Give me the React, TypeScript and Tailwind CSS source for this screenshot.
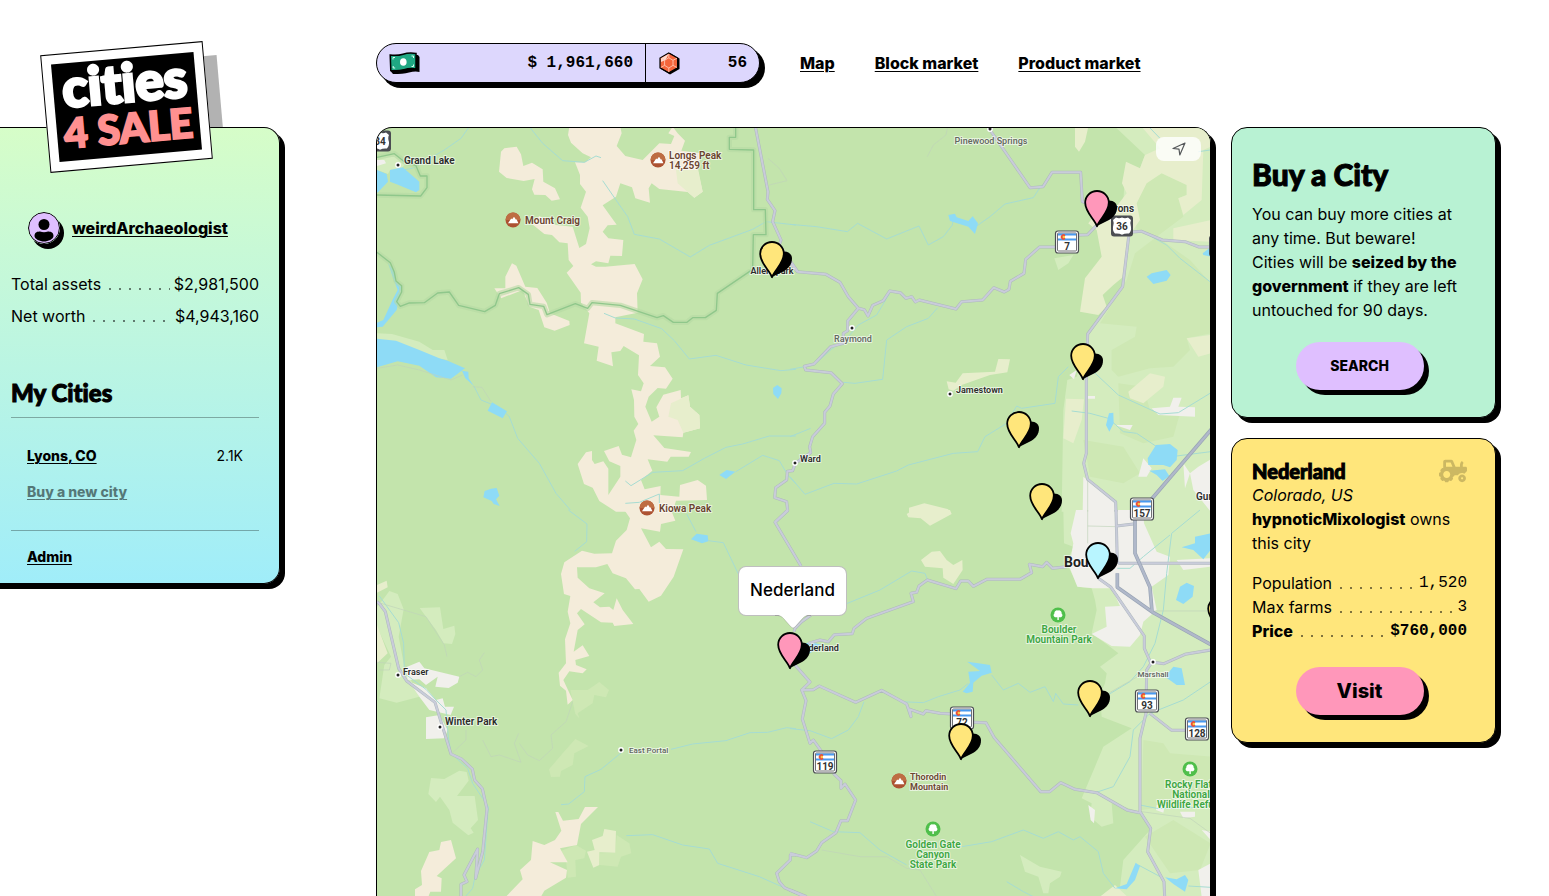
import React from "react";
import { FaTractor } from "react-icons/fa";

type Tile = {
  sand?: string;
  meadow?: string;
  field?: string;
  grove?: string;
  town?: string;
  water?: string;
  river?: string;
  track?: string;
  border?: string;
  road?: string;
  highway?: string;
};

/* Map geometry is stored per tile, at three units to the pixel. */
const TILES: { x: number; y: number; d: Tile }[] = [
  {
    x: -1,
    y: -8,
    d: {
      sand:
        "M580 20L733 20L737 40L722 78L748 108L800 120L850 70L885 72L895 48L877 40L890 20L905 40L927 62L916 92L975 100L965 150L980 215L955 233L935 216L850 207L827 190L818 205L822 248L778 235L768 202L733 190L720 230L680 256L722 314L695 316L680 335L697 355L742 360L738 408L703 407L697 430L660 424L645 433L660 440L688 440L776 432L800 478L783 520L785 578L718 592L718 610L804 642L802 665L843 670L852 710L822 738L867 742L890 776L870 806L845 804L818 830L808 860L827 905L850 890L841 862L862 824L914 810L915 835L937 826L942 860L970 885L972 925L922 938L920 952L832 946L865 984L945 996L938 1010L884 1010L874 1025L815 1018L829 1052L795 1080L806 1108L854 1098L853 1125L910 1130L912 1095L965 1080L990 1097L993 1140L900 1142L890 1175L720 1175L670 1143L650 1103L624 1092L605 1032L630 997L648 993L648 1020L656 1032L682 1024L697 1046L697 1125L733 1070L733 1038L700 1024L684 993L728 978L738 1004L765 1012L781 960L773 932L787 912L775 890L774 840L766 808L795 814L803 790L786 765L789 706L743 678L733 693L706 697L711 739L662 722L668 680L624 670L640 580L615 548L614 518L572 458L592 438L578 420L575 370L550 367L528 345L505 342L468 312L490 288L540 315L590 320L610 384L630 372L641 325L635 290L614 263L630 215L612 192L612 165L597 127L628 127L645 112L620 100L585 68L576 45ZM375 95L385 85L422 80L435 103L442 138L468 128L500 148L502 185L537 205L552 238L527 242L508 225L475 224L468 208L476 177L443 183L392 174L369 155ZM408 430L421 437L448 500L484 504L512 548L522 580L580 603L581 615L536 632L505 622L488 570L460 560L440 510L375 535L355 505L388 505L388 470Z",
      field:
        "M900 150L967 150L980 215L955 233L935 216L905 190ZM937 826L942 860L970 885L972 925L922 938L905 900L877 890L885 850Z",
      meadow:
        "M3 112L55 103L90 130L75 148L42 150L36 162L3 150ZM3 640L48 642L130 665L170 690L205 690L215 720L150 710L3 660Z",
      town: "M3 120L25 120L30 130L3 138Z",
      water:
        "M3 150L32 162L36 185L3 220ZM42 150L80 142L130 185L130 210L120 217L62 193L42 185ZM36 428L56 455L60 485L76 500L62 570L20 620L3 622L3 608L22 600L52 535L65 510L50 470ZM3 656L60 662L130 690L190 715L215 722L267 745L225 776L180 772L130 737L65 724L3 742ZM258 752L277 755L278 775L293 797L268 775ZM348 847L393 874L380 895L335 872ZM1204 795L1217 805L1216 820L1206 837L1192 822L1191 804ZM1030 1065L1052 1050L1078 1055L1050 1077ZM345 1106L362 1104L370 1127L360 1138L371 1158L353 1152L347 1143L322 1132L326 1113Z",
      river:
        "M277 24L255 55L205 90L110 145L80 150M463 24L500 70L560 122L625 127L660 108L675 113M680 182L720 240L755 290L775 343L850 357L943 411L1000 376L1130 328L1170 305L1260 315M684 580L718 594L775 597L857 626L895 662L940 717L1020 706L1110 735L1215 752L1260 748M293 797L315 840L345 852M390 880L400 890L425 955L490 1030L540 1120L583 1170M748 1083L765 1097L830 1057L920 1052L985 1015L1050 982L1100 972L1180 948L1260 948M1078 1056L1160 1006L1210 1022L1235 1065L1260 1092M748 1150L790 1147L850 1122L850 1150",
      track: "M3 745L65 735L130 750L225 780L260 765M290 800L318 802L345 845M1176 115L1210 145L1233 182L1180 195",
      border:
        "M3 112L55 101L85 125L120 137L133 168L153 168L153 203L134 228L3 225M3 397L43 428L55 457L60 483L77 497L77 516L62 545L73 559L100 549L145 548L185 519L220 516L248 556L326 575L358 556L370 521L428 503L457 523L462 553L503 559L513 584L598 551L635 565L648 548L733 556L843 593L862 587L892 607L933 607L950 593L988 593L1021 571L1024 520L1130 448L1132 344L1170 344L1168 269L1133 269L1133 90L1060 88L1060 52L1079 52L1079 20",
      road:
        "M1138 20L1176 215L1174 238L1197 272L1190 305L1215 360L1210 375L1265 455M1258 1030L1250 1052L1234 1054L1232 1080L1199 1103L1196 1133L1232 1145L1235 1172L1197 1207",
    },
  },
  {
    x: 413,
    y: -8,
    d: {
      meadow:
        "M975 20L1262 20L1262 1175L815 1175L820 870L832 780L860 770L893 640L1000 500L1010 370L920 330L895 310L960 285L1000 240L1008 130L1050 145L1065 105ZM793 415L850 405L835 430L805 450Z",
      grove:
        "M1010 480L1035 400L1100 350L1200 420L1262 490L1262 640L1190 655L1200 690L1150 740L1080 745L985 770L965 750L965 690L1035 650L1040 620L930 610ZM1060 190L1115 160L1190 195L1190 225L1165 235L1180 290L1100 350L1040 330L1030 250ZM985 790L1060 800L1080 870L1170 880L1150 950L1060 970L990 940ZM880 960L1000 980L1050 1060L1000 1090L900 1070Z",
      field:
        "M855 20L895 20L885 65L867 95L855 80ZM1055 20L1262 20L1262 80L1240 90L1235 240L1180 285L1165 235L1190 225L1190 195L1115 160L1070 190L1040 250L1050 300L1015 350L1000 470L970 495L938 525L950 560L925 585L870 575L885 475L935 410L920 330L895 310L910 290L960 285L1010 220L996 190L1008 125L1050 145L1065 105L1110 85ZM470 784L497 788L518 760L615 755L625 717L660 718L652 757L600 765L515 795L490 812L476 808ZM357 1163L403 1150L475 1168L475 1180L357 1180ZM828 836L882 838L875 900L850 970L820 955ZM1190 655L1262 645L1262 700L1225 710ZM1015 815L1080 760L1125 770L1120 800L1060 850L1020 835ZM1150 325L1262 300L1262 365L1150 360Z",
      town:
        "M880 1070L975 1146L980 1175L878 1175ZM1085 865L1140 860L1150 833L1175 833L1165 860L1215 862L1215 890L1105 885ZM1225 1040L1262 1018L1262 1175L1210 1110L1200 1060ZM1180 1030L1200 1060L1185 1105ZM1045 1070L1060 1015L1085 1045L1070 1070ZM975 915L1028 915L1020 930ZM838 765L860 750L852 778ZM893 828L915 828L915 836L893 836ZM950 295L990 295L985 325Z",
      water:
        "M475 285L495 281L500 292L535 303L548 289L564 310L555 342L535 320L480 303ZM1070 470L1085 460L1130 450L1142 465L1130 482L1090 492ZM957 880L970 878L971 910L958 935L948 915ZM1073 1015L1098 975L1140 972L1163 990L1160 1020L1140 1042L1120 1035L1075 1035ZM1078 1052L1125 1048L1138 1068L1118 1083L1100 1065ZM1238 400L1262 382L1262 410L1240 405Z",
      river:
        "M0 313L80 320L172 335L203 310L290 357L387 318L415 375L460 350L487 315L490 295M560 318L600 290L645 252L730 233L755 195M0 748L45 740M443 563L415 595L350 620L290 660L278 778L195 790L160 787M299 520L260 585L205 615L175 650L122 690L72 735M0 950L62 925M835 740L805 770L795 850L695 865L680 858L650 910L585 950L563 995L490 1000L355 1035L320 1053L200 1092L132 1090L45 1123L0 1070M905 750L985 825L1110 882L1165 878L1260 820M845 873L900 880L955 895L1000 935L1040 940L1100 980M1055 334L1130 375L1170 415L1260 485M1160 1008L1262 995M1080 24L1110 55M1262 90L1225 95",
      track: "M472 24L468 45L430 75L412 110M893 1080L893 1175",
      road:
        "M0 430L23 455L108 463L150 487L175 530L205 565L223 569L234 588L248 556L280 542L299 513L331 518L348 535L365 530L376 546L388 540L498 567L515 545L578 540L611 503L643 516L657 508L661 484L702 460L707 418L749 381L800 381M866 345L893 344L921 315M205 565L173 603L173 632L160 640L160 670L122 680L72 732L43 739L47 750L123 758L157 791L130 822L120 858L104 877L104 910L68 950L59 980L62 998L16 1030M600 30L720 203L759 200L786 157L872 157L877 245L890 250M1028 336L1055 334L1117 360L1185 365L1227 381L1262 381M1016 350L998 500L893 642L889 770L889 1000L881 1030L893 1078L977 1146L978 1175",
      highway: "M1265 927L1085 1137",
    },
  },
  {
    x: -1,
    y: 382,
    d: {
      sand:
        "M705 0L885 0L898 32L855 42L852 65L795 55L825 112L850 95L870 117L922 118L893 200L855 257L818 275L790 237L777 238L750 205L710 190L694 162L660 172L603 172L605 203L640 235L686 250L652 277L672 292L700 290L712 300L722 265L740 300L772 342L715 348L710 338L675 337L615 297L603 310L626 343L605 360L593 425L620 406L640 438L598 450L600 465L632 478L620 490L580 484L562 510L590 570L575 584L570 542L552 527L548 488L570 460L567 388L583 340L575 305L583 258L564 252L555 192L565 157L618 122L655 131L708 130L720 92L752 60L762 25L745 0ZM538 906L547 906L561 932L608 927L627 891L666 891L615 942L603 1005L552 1015L575 1057L522 1057L573 1080L570 1103L505 1142L495 1160L390 1160L440 1108L432 1080L465 1050L470 993L505 1005L537 990L556 962ZM195 996L225 990L240 1045L182 1098L197 1105L195 1145L163 1145L157 1160L117 1160L117 1138L138 1125L135 1083L160 1026L190 1020Z",
      meadow:
        "M20 270L40 243L65 252L83 298L68 380L85 470L130 560L62 578L10 565L25 465L45 440L3 350L3 290ZM131 294L192 292L202 357L235 347L238 372L228 402L203 400L180 360L150 320ZM165 804L205 807L250 782L272 786L278 812L243 858L296 858L306 930L284 955L293 968L277 976L230 938L220 900L192 860L180 876L157 852Z",
      field:
        "M3 225L32 212L35 232L3 248ZM3 345L35 430L3 460ZM648 990L680 978L685 957L720 963L718 1028L670 1027L670 1065L652 1073L633 1025L656 1020Z",
      grove:
        "M583 540L635 540L670 516L699 540L690 562L655 555L650 580L605 610L610 625L598 612ZM598 687L638 708L595 730L590 765L555 783L552 800L525 801L519 778L560 730ZM556 1022L600 1005L630 1022L625 1045L598 1050L600 1100L575 1103L570 1050ZM722 975L760 1000L766 1030L735 1040L725 1070L672 1065L670 1030L718 1028Z",
      town:
        "M90 472L130 455L145 475L250 500L245 518L218 534L178 530L185 500L150 525L130 508L95 510ZM150 622L190 615L215 660L205 685L150 687ZM130 560L100 515L150 535L180 570L200 565L207 590L234 590L224 615L160 600Z",
      water: "M945 88L962 71L995 76L997 94L978 100Z",
      river:
        "M577 0L633 42L632 95L596 124M932 12L960 65M997 92L1042 98L1087 192M10 258L68 338L83 400L85 490L150 538L180 570L210 600L217 680L225 730L275 775L290 820L337 890L325 1050L297 1100L290 1135L268 1160M885 718L950 702L1050 692L1122 668L1175 667L1232 653L1260 656M736 728L675 778L627 800L625 845L578 882L555 884M751 977L830 974L920 1005L1000 1017L1025 1060L1150 1100L1235 1138",
      track:
        "M15 280L150 320L205 405L213 440M3 457L45 460L40 480L10 480M250 500L275 487L300 500L320 480L310 450L325 428M230 728L270 690L270 660M320 690L345 740L370 735L435 757L415 700L428 670M430 700L455 735L490 752L530 715L525 675L570 635L590 575",
      road:
        "M3 275L12 283L28 305L68 475L92 513L177 577L225 732L257 747L289 777L296 810L319 836L333 897L320 1025L299 1105L305 1017L264 1095L273 1115L255 1123L255 1160M1235 0L1197 37L1275 168M1260 1035L1243 1035L1243 1050L1202 1090L1210 1115L1225 1133L1290 1162",
    },
  },
  {
    x: 413,
    y: 382,
    d: {
      meadow:
        "M820 0L822 100L850 110L830 160L865 230L905 235L915 270L920 300L905 370L960 410L985 430L930 470L950 490L945 520L930 555L935 620L1025 655L940 710L915 770L875 865L905 880L900 920L935 950L970 940L965 880L1050 905L1080 960L1000 1050L990 1130L930 1160L1262 1160L1262 0ZM690 1035L750 1070L815 1085L810 1100L780 1120L775 1150L760 1150L745 1100L705 1085Z",
      grove:
        "M1060 690L1120 700L1140 730L1262 740L1262 870L1055 900ZM1065 980L1150 930L1262 1000L1230 1080L1140 1090Z",
      field:
        "M350 12L370 0L480 0L485 12L420 47L392 25L355 22ZM393 150L425 125L450 123L470 150L490 165L517 150L518 180L490 222L460 203L458 175L405 170ZM930 1160L975 1125L1012 1160Z",
      town:
        "M858 0L1060 0L1062 40L1100 125L1140 140L1135 195L1085 230L1100 300L1060 335L1050 375L1020 410L965 408L905 372L950 350L945 290L990 288L965 235L910 235L862 230L838 170L850 100L842 70ZM1160 150L1262 145L1262 170L1180 180ZM895 885L915 900L912 940L902 930ZM1235 960L1262 965L1262 990ZM1225 1080L1262 1060L1262 1160L1235 1160ZM1170 905L1215 905L1215 920L1180 925ZM1100 885L1125 885L1120 908L1098 900Z",
      water:
        "M1175 112L1215 100L1215 80L1262 70L1262 120L1240 148L1210 120ZM1158 270L1170 230L1190 218L1212 228L1208 260L1180 282ZM1125 500L1150 470L1175 475L1185 525L1160 525ZM532 455L565 460L600 465L605 488L575 497L550 518L548 545L530 550L518 545L540 518L535 485L570 483ZM1037 1058L1050 1068L1035 1110L1010 1138L975 1135L1010 1122ZM1125 1102L1160 1108L1185 1095L1195 1110L1185 1145L1150 1122ZM30 408L60 395L95 405L60 430Z",
      river:
        "M160 285L270 240L365 183L405 190L412 208M0 656L60 662L125 686L175 660L205 620L222 575M330 575L400 578L445 560L510 540L535 520M605 495L640 540L685 520L720 547L765 530L790 575L797 550L820 582L865 585M945 560L1020 515L1060 470L1095 400L1120 300L1130 190L1145 70L1230 0M1262 515L1180 570L1080 610L1030 660L1020 740L970 830L910 850M60 935L130 965L210 968L270 1020L350 1065M515 1010L605 995L700 960L760 985L805 965L850 990L870 980L925 1025L940 1090L975 1135M650 1115L700 1145L730 1160M982 175L1020 175L1060 140L1140 75M1050 885L1100 895L1150 895L1262 890M1045 1065L1120 1105M1195 1128L1262 1132",
      track:
        "M893 0L893 100M893 48L978 50M1090 303L1262 303M955 550L1060 490M1055 905L1200 925L1262 970M95 1020L210 1040L290 1040L350 1075L390 1080L440 1160",
      road:
        "M63 315L35 335L15 355L12 365M15 465L60 516L35 540L70 539L88 528L197 577L275 541L350 582L363 620L360 598L400 612L408 602L450 610L485 612M550 637L588 638L612 682L752 845L779 845L812 818L855 838L920 848L1013 901L1049 908M35 540L48 572L37 627L60 700L70 690L95 725M130 790L153 812L153 835L165 822L197 870L173 932L153 932L138 968L95 998L80 1023L50 1043L0 1030M55 400L90 390L115 395L133 374L187 371L192 355L230 325L370 275L363 250L380 247L387 228L412 210L498 236L512 213L535 213L550 229L590 208L690 208L725 188L718 163L758 170L770 157L788 175L830 170M925 205L963 232L1063 378L1063 415L1083 460L1070 480L1068 610L1050 685L1050 905L1082 955L1073 1025L1122 1115L1124 1160M1090 457L1122 461L1185 433L1262 420M1080 610L1145 661L1190 661M980 48L1030 42M985 160L1262 160M978 0L982 160M0 1140L50 1160",
      highway: "M982 190L982 232L1090 308L1265 405M1035 30L1035 130L1080 232L1086 305",
    },
  },
];

const LAYERS: { key: keyof Tile; fill?: string; stroke?: string; width?: number }[] = [
  { key: "meadow", fill: "#d4ecbe" },
  { key: "grove", fill: "#cee8b4" },
  { key: "sand", fill: "#f4ecda" },
  { key: "field", fill: "#e7eecc" },
  { key: "town", fill: "#f1f0ec" },
  { key: "river", stroke: "#a6dcd2", width: 3 },
  { key: "water", fill: "#8edbf6" },
  { key: "track", stroke: "#bfd3b9", width: 2 },
  { key: "border", stroke: "#b5dba3", width: 16 },
  { key: "border", stroke: "#8fc78b", width: 4 },
  { key: "road", stroke: "#aeb8bd", width: 9 },
  { key: "road", stroke: "#c9ccda", width: 6 },
  { key: "highway", stroke: "#98a4b4", width: 11 },
  { key: "highway", stroke: "#b0b8ca", width: 7 },
];

type Label = { x: number; y: number; t: string; tone: string; size?: number; weight?: number; anchor?: "start" | "middle" };

const TOWN_INK = "#2b2b2b";
const HAMLET_INK = "#62665f";
const PEAK_INK = "#6b4430";
const PARK_INK = "#3da642";

const LABELS: Label[] = [
  { x: 27, y: 36, t: "Grand Lake", tone: TOWN_INK },
  { x: 292, y: 31, t: "Longs Peak", tone: PEAK_INK },
  { x: 292, y: 41, t: "14,259 ft", tone: PEAK_INK },
  { x: 148, y: 96, t: "Mount Craig", tone: PEAK_INK },
  { x: 395, y: 146, t: "Allenspark", tone: TOWN_INK, size: 9, anchor: "middle" },
  { x: 614, y: 16, t: "Pinewood Springs", tone: HAMLET_INK, size: 9, weight: 500, anchor: "middle" },
  { x: 731, y: 84, t: "Lyons", tone: TOWN_INK, size: 10 },
  { x: 476, y: 214, t: "Raymond", tone: HAMLET_INK, size: 9, weight: 500, anchor: "middle" },
  { x: 579, y: 265, t: "Jamestown", tone: TOWN_INK, size: 9 },
  { x: 423, y: 334, t: "Ward", tone: TOWN_INK, size: 9 },
  { x: 282, y: 384, t: "Kiowa Peak", tone: PEAK_INK },
  { x: 26, y: 547, t: "Fraser", tone: TOWN_INK, size: 9 },
  { x: 68, y: 597, t: "Winter Park", tone: TOWN_INK },
  { x: 252, y: 625, t: "East Portal", tone: HAMLET_INK, size: 8, weight: 500 },
  { x: 441, y: 523, t: "Nederland", tone: TOWN_INK, size: 9, anchor: "middle" },
  { x: 687, y: 439, t: "Boulder", tone: "#222", size: 14, weight: 700 },
  { x: 819, y: 372, t: "Gunbarrel", tone: TOWN_INK, size: 10 },
  { x: 776, y: 549, t: "Marshall", tone: HAMLET_INK, size: 8, weight: 500, anchor: "middle" },
  { x: 682, y: 505, t: "Boulder", tone: PARK_INK, anchor: "middle" },
  { x: 682, y: 515, t: "Mountain Park", tone: PARK_INK, anchor: "middle" },
  { x: 533, y: 652, t: "Thorodin", tone: PEAK_INK, size: 9 },
  { x: 533, y: 662, t: "Mountain", tone: PEAK_INK, size: 9 },
  { x: 556, y: 720, t: "Golden Gate", tone: PARK_INK, anchor: "middle" },
  { x: 556, y: 730, t: "Canyon", tone: PARK_INK, anchor: "middle" },
  { x: 556, y: 740, t: "State Park", tone: PARK_INK, anchor: "middle" },
  { x: 814, y: 660, t: "Rocky Flats", tone: PARK_INK, anchor: "middle" },
  { x: 814, y: 670, t: "National", tone: PARK_INK, anchor: "middle" },
  { x: 814, y: 680, t: "Wildlife Refuge", tone: PARK_INK, anchor: "middle" },
];

const TOWNS = [
  [21, 37], [613, 1], [475, 200], [573, 266], [418, 335], [21, 547], [63, 599], [244, 622], [776, 534],
];
const PEAKS = [[281, 32], [136, 92], [270, 380], [522, 653]];
const PARKS = [[681, 487], [556, 701], [813, 641]];
const STATE_ROUTES: [number, number, string][] = [
  [690, 114, "7"], [765, 381, "157"], [448, 634, "119"], [585, 590, "72"], [770, 573, "93"], [820, 601, "128"],
];
const US_ROUTES: [number, number, string][] = [[745, 98, "36"], [3, 13, "34"], [843, 118, "287"]];

const PINS = [
  { x: 395, y: 150, fill: "#ffe67b", name: "Allenspark" },
  { x: 720, y: 99, fill: "#ff97ba", name: "Lyons" },
  { x: 706, y: 252, fill: "#ffe67b", name: "Altona" },
  { x: 642, y: 320, fill: "#ffe67b", name: "Gold Hill" },
  { x: 665, y: 392, fill: "#ffe67b", name: "Crisman" },
  { x: 721, y: 451, fill: "#b8f5ff", name: "Boulder" },
  { x: 843, y: 505, fill: "#ffe67b", name: "Louisville" },
  { x: 713, y: 589, fill: "#ffe67b", name: "Eldorado Springs" },
  { x: 584, y: 632, fill: "#ffe67b", name: "Pinecliffe" },
  { x: 413, y: 541, fill: "#ff97ba", name: "Nederland" },
];

function MapCanvas() {
  return (
    <svg className="absolute inset-0 h-full w-full font-['Roboto','Inter',sans-serif]" aria-hidden="true">
      {LAYERS.map((layer, i) =>
        TILES.map((tile, j) => {
          const d = tile.d[layer.key];
          return d ? (
            <g key={`${i}-${j}`} transform={`translate(${tile.x} ${tile.y}) scale(0.33333)`}>
              <path
                d={d}
                fill={layer.fill ?? "none"}
                stroke={layer.stroke ?? "none"}
                strokeWidth={layer.width}
                strokeLinejoin="round"
                strokeOpacity={layer.width === 16 ? 0.6 : 1}
              />
            </g>
          ) : null;
        }),
      )}
      {TOWNS.map(([x, y]) => (
        <circle key={`${x}-${y}`} cx={x} cy={y} r="2.200" fill="#222" stroke="#fff" strokeWidth="1.400" />
      ))}
      {PEAKS.map(([x, y]) => (
        <g key={`${x}-${y}`} transform={`translate(${x} ${y})`}>
          <circle r="7.500" fill="#ad5232" />
          <path d="M-7.500 0a7.500 7.500 0 0 1 15 0z" fill="#be6d43" />
          <path d="M-5 3.200L-1.800-1.600L-.8-.8L1-3.200L3-.2L3.600-.8L5.400 3.200Z" fill="#fff" />
        </g>
      ))}
      {PARKS.map(([x, y]) => (
        <g key={`${x}-${y}`} transform={`translate(${x} ${y})`}>
          <circle r="7.500" fill="#4fbf4b" />
          <path
            d="M-.6 5V2.200H-3A2.200 2.200 0 0 1-3.600-1.600A2.600 2.600 0 0 1 0-4.400A2.600 2.600 0 0 1 3.600-1.600A2.200 2.200 0 0 1 3 2.200H.8V5Z"
            fill="#fff"
          />
        </g>
      ))}
      {LABELS.map((l, i) => (
        <text
          key={i}
          x={l.x}
          y={l.y}
          fill={l.tone}
          fontSize={l.size ?? 10}
          fontWeight={l.weight ?? 600}
          textAnchor={l.anchor ?? "start"}
          stroke="#ffffff"
          strokeOpacity="0.6"
          strokeWidth="2"
          strokeLinejoin="round"
          paintOrder="stroke"
        >
          {l.t}
        </text>
      ))}
      {STATE_ROUTES.map(([x, y, n]) => (
        <g key={n} transform={`translate(${x} ${y})`}>
          <rect x="-11.500" y="-11" width="23" height="22" rx="2.500" fill="#fff" stroke="#4b4d52" strokeWidth="1.200" />
          <rect x="-9.500" y="-9" width="19" height="18" rx="1" fill="#fff" stroke="#4b4d52" strokeWidth="0.800" />
          <path d="M-9-8.600H9V-6.400H-9ZM-9-3.600H9V-1.400H-9Z" fill="#4a9af0" />
          <path d="M-1.500-6.800A2.700 2.700 0 1 0-1.500-3.200L-3-5Z" fill="#e8503a" />
          <circle cx="-3.200" cy="-5" r="1.200" fill="#ffc93c" />
          <text y="7.600" textAnchor="middle" fontSize="10" fontWeight="700" fill="#333">
            {n}
          </text>
        </g>
      ))}
      {US_ROUTES.map(([x, y, n]) => (
        <g key={n} transform={`translate(${x} ${y})`}>
          <rect x="-11" y="-10.500" width="22" height="21" rx="3" fill="#4b4d52" />
          <path
            d="M-6-8.500Q-3-7 0-8.500Q3-7 6-8.500L9-6Q7.500-3 9 1Q9.500 5 7 7.500Q3 7 0 8.700Q-3 7-7 7.500Q-9.500 5-9 1Q-7.500-3-9-6Z"
            fill="#fff"
          />
          <text y="3.600" textAnchor="middle" fontSize="10" fontWeight="700" fill="#333">
            {n}
          </text>
        </g>
      ))}
    </svg>
  );
}

function CityMap() {
  return (
    <section
      aria-label="City map"
      className="relative flex-1 self-stretch overflow-hidden rounded-t-2xl border border-b-0 border-black bg-[#c3e4ac]"
    >
      <MapCanvas />
      {PINS.map((p) => (
        <button
          key={p.name}
          type="button"
          aria-label={p.name}
          className="absolute -mt-[37px] -ml-[13px] h-[38px] w-[34px]"
          style={{ left: p.x, top: p.y }}
        >
          <svg viewBox="-13 -37 34 38" className="h-full w-full">
            <path d="M-1-.5L10-6C17-9.500 20-14 20-19.500C20-23.500 17-26.500 12-26.500L-2-12Z" />
            <path
              d="M0-.8C-2.500-8-11.800-14.500-11.800-24.200A11.800 11.800 0 0 1 11.800-24.200C11.800-14.500 2.500-8 0-.8Z"
              fill={p.fill}
              stroke="#000"
              strokeWidth="1.800"
              strokeLinejoin="round"
            />
          </svg>
        </button>
      ))}
      <div className="absolute top-[438px] left-[361px] flex h-[50px] w-[109px] items-center justify-center rounded-lg border border-black/25 bg-white text-[17px] font-medium">
        Nederland
        <svg viewBox="0 0 36 14" className="absolute top-full left-9 h-[14px] w-9" aria-hidden="true">
          <path d="M0-1Q6 0 9 4L16 12Q18 14 20 12L27 4Q30 0 36-1Z" fill="#fff" />
          <path d="M0 .5Q6 0 9 4L16 12Q18 14 20 12L27 4Q30 0 36 .5" fill="none" stroke="#000" strokeOpacity="0.2" strokeWidth="0.800" />
        </svg>
      </div>
      <button
        type="button"
        aria-label="Show my location"
        className="absolute top-[9px] right-[9px] flex h-6 w-[45px] items-center justify-center rounded-lg bg-white/80"
      >
        <svg viewBox="0 0 16 16" className="h-4 w-4" fill="none" stroke="#55585a" strokeWidth="1.200" strokeLinejoin="round">
          <path d="M2 7.500L14 2L8.800 14L8 8.200Z" />
        </svg>
      </button>
    </section>
  );
}

function Leader() {
  return (
    <span
      aria-hidden="true"
      className="mt-[10px] mr-1 ml-1 h-[4px] flex-1 bg-[radial-gradient(circle,#00000080_1px,transparent_1px)] bg-[length:10px_4px] bg-repeat-x"
    />
  );
}

function Row({ label, value, mono, bold, tall }: { label: string; value: string; mono?: boolean; bold?: boolean; tall?: boolean }) {
  return (
    <div className={`flex items-center ${tall ? "h-8" : "h-6"} ${bold ? "font-bold" : ""}`}>
      <dt className={bold ? "font-extrabold" : ""}>{label}</dt>
      <Leader />
      <dd className={mono ? "font-['Liberation_Mono',monospace]" : ""}>{value}</dd>
    </div>
  );
}

const link = "font-extrabold underline decoration-1 underline-offset-2";
const card = "rounded-2xl border border-black pr-7 pb-[27px] pl-5 shadow-[5px_5px_0_#000]";
const display = "font-['Lato',sans-serif] font-black [font-variant-ligatures:none] [-webkit-text-stroke:1px_#000]";
const pill = "h-12 w-32 rounded-full font-extrabold shadow-[5px_5px_0_#000]";

function Sidebar() {
  return (
    <aside className="relative mt-[127px] w-[280px] shrink-0 self-start rounded-r-2xl border border-l-0 border-black bg-linear-to-b from-[#d6fdc8] to-[#a0edf9] pt-[84px] pr-5 pb-4 pl-[11px] shadow-[5px_5px_0_#000,0_5px_0_#000]">
      <div className="absolute -top-[66px] left-[59px] -z-10 h-[118px] w-[163px] -rotate-5 bg-black/30" />
      <a
        href="#home"
        className="absolute -top-[80px] left-[45px] h-[118px] w-[163px] -rotate-5 border border-black bg-white p-[9px]"
      >
        <span className="flex h-full flex-col items-center justify-center bg-black font-['Lato',sans-serif] font-black [font-variant-ligatures:none]">
          <span className="-mt-2 text-[53px] leading-[50px] text-white [-webkit-text-stroke:3px_#fff]">cities</span>
          <span className="text-[41px] leading-[42px] text-[#ff9090] [-webkit-text-stroke:2px_#ff9090]">4 SALE</span>
        </span>
      </a>
      <div className="ml-[17px] flex items-center gap-3">
        <svg viewBox="0 0 32 32" className="h-8 w-8 rounded-full shadow-[4px_5px_0_#000]" aria-hidden="true">
          <circle cx="16" cy="16" r="15.500" fill="#dfbfff" stroke="#000" />
          <circle cx="16" cy="12.500" r="5.500" />
          <path d="M6.500 24C6.500 20 10 19.500 12 19.500Q16 21 20 19.500C22 19.500 25.500 20 25.500 24C25.500 27 20 29.500 16 29.500S6.500 27 6.500 24Z" />
        </svg>
        <a href="#profile" className={link}>
          weirdArchaeologist
        </a>
      </div>
      <dl className="mt-6">
        <Row label="Total assets" value="$2,981,500" tall />
        <Row label="Net worth" value="$4,943,160" tall />
      </dl>
      <h2 className={`mt-[45px] border-b border-black/30 pb-2 text-2xl ${display}`}>My Cities</h2>
      <ul className="border-b border-black/30 px-4 pt-5 pb-5 text-sm">
        <li className="flex h-9 items-center justify-between">
          <a href="#lyons" className={link}>
            Lyons, CO
          </a>
          <span>2.1K</span>
        </li>
        <li className="flex h-9 items-center opacity-50">
          <a href="#buy" className={link}>
            Buy a new city
          </a>
        </li>
      </ul>
      <div className="mt-4 px-4 text-sm leading-5">
        <a href="#admin" className={link}>
          Admin
        </a>
      </div>
    </aside>
  );
}

function Header() {
  return (
    <header className="flex h-[127px] shrink-0 items-start gap-10 pt-[43px]">
      <div className="flex h-10 w-96 shrink-0 rounded-full border border-black bg-[#ddd7fd] font-['Liberation_Mono',monospace] font-bold shadow-[5px_5px_0_#000]">
        <div className="flex flex-1 items-center justify-between border-r border-black pr-3 pl-3">
          <svg viewBox="0 0 31 23" className="h-[23px] w-[31px]" aria-hidden="true">
            <path d="M3 5Q8 6 14 4T29 3L30.500 5V20Q26 19 20 20.500T4 22L1.500 19Z" />
            <path d="M1.200 3Q8 4 14 2.200T27 1.500V17Q21 16 15 17.600T1.800 18.500Z" fill="#1fa783" stroke="#000" strokeWidth="1.500" />
            <ellipse cx="14.300" cy="10" rx="3.300" ry="3.800" fill="#fff" />
            <path d="M4 5.500h2M4 5.500v2M24.500 4h-2M24.500 4v2M4.200 16h2M4.200 16v-2M24.500 14.500h-2M24.500 14.500v-2" stroke="#d8fff0" />
          </svg>
          <span className="whitespace-pre">$ 1,961,660</span>
        </div>
        <div className="flex w-[113px] items-center justify-between pr-3 pl-[13px]">
          <svg viewBox="0 0 21 23" className="h-[23px] w-[21px]" aria-hidden="true">
            <path d="M11 1L20.500 6.500V17L11 22.500L2 17Z" />
            <path d="M9.800 1L18.600 6V15.800L9.800 20.800L1 15.800V6Z" fill="#f4663c" stroke="#000" strokeWidth="1.200" />
            <path d="M9.800 1.800L2 6.200V10L6.500 8Z" fill="#ffd9cb" />
            <path
              d="M9.800 5.800L14 8.300V13.400L9.800 16L5.600 13.400V8.300ZM9.800 2V5.800M18 6.200L14 8.300M18 15.500L14 13.400M9.800 20V16M1.800 15.500L5.600 13.400M1.800 6.200L5.600 8.300"
              fill="none"
              stroke="#ffc4ae"
              strokeWidth="0.900"
            />
          </svg>
          <span>56</span>
        </div>
      </div>
      <nav className="flex h-10 items-center gap-10 whitespace-nowrap">
        <a href="#map" className={link}>
          Map
        </a>
        <a href="#blocks" className={link}>
          Block market
        </a>
        <a href="#products" className={link}>
          Product market
        </a>
      </nav>
    </header>
  );
}

function Cards() {
  return (
    <div className="flex w-[265px] shrink-0 flex-col gap-5 self-start">
      <section className={`${card} bg-[#b8f2d3] pt-7`}>
        <h2 className={`text-3xl leading-9 ${display}`}>Buy a City</h2>
        <p className="mt-[10px]">
          You can buy more cities at any time. But beware!
          <br />
          Cities will be <b className="font-extrabold">seized by the government</b> if they are left untouched for 90 days.
        </p>
        <div className="mt-5 flex justify-center">
          <button type="button" className={`${pill} bg-[#dfbfff] text-sm`}>
            SEARCH
          </button>
        </div>
      </section>
      <section className={`${card} bg-[#ffe67b] pt-5`}>
        <div className="flex items-center justify-between">
          <h3 className={`text-xl leading-6 ${display}`}>Nederland</h3>
          <FaTractor className="h-6 w-7 text-black/20" aria-hidden="true" />
        </div>
        <p className="italic">Colorado, US</p>
        <p>
          <b className="font-extrabold">hypnoticMixologist</b> owns this city
        </p>
        <dl className="mt-4">
          <Row label="Population" value="1,520" mono />
          <Row label="Max farms" value="3" mono />
          <Row label="Price" value="$760,000" mono bold />
        </dl>
        <div className="mt-6 flex justify-center">
          <button type="button" className={`${pill} bg-[#ff97ba] text-xl`}>
            Visit
          </button>
        </div>
      </section>
    </div>
  );
}

export default function App() {
  return (
    <div className="isolate flex min-h-screen bg-white font-['Inter',sans-serif] text-base text-black">
      <Sidebar />
      <main className="ml-24 flex min-w-0 flex-1 flex-col pr-[53px]">
        <Header />
        <div className="flex flex-1 gap-5">
          <div className="flex min-w-0 flex-1 rounded-t-2xl shadow-[5px_5px_0_#000]">
            <CityMap />
          </div>
          <Cards />
        </div>
      </main>
    </div>
  );
}
